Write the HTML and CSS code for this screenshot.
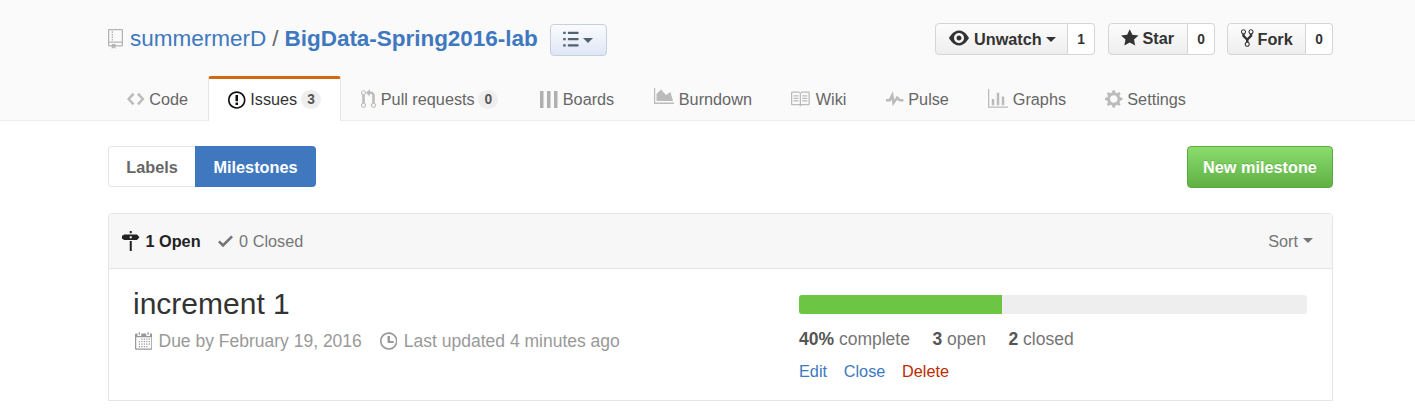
FILE: index.html
```
<!DOCTYPE html>
<html lang="en">
<head>
<meta charset="utf-8">
<title>Milestones · summermerD/BigData-Spring2016-lab</title>
<link rel="stylesheet" href="styles.css">
</head>
<body>
<header class="repohead">
  <div class="container">
    <div class="title-row">
      <svg class="icon repo-icon" width="15" height="20" viewBox="0 0 12 16"><path d="M4 9H3V8h1v1zm0-3H3v1h1V6zm0-2H3v1h1V4zm0-2H3v1h1V2zm8-1v12c0 .55-.45 1-1 1H6v2l-1.500-1.500L3 16v-2H1c-.55 0-1-.45-1-1V1c0-.55.45-1 1-1h10c.55 0 1 .45 1 1zm-1 10H1v2h2v-1h3v1h5v-2zm0-10H1v9h10V1z"/><path d="M3 2h1v1H3zm0 2h1v1H3zm0 2h1v1H3zm0 2h1v1H3z"/></svg>
      <h1 class="repo-name"><a href="#">summermerD</a><span class="slash">/</span><a href="#" class="strong">BigData-Spring2016-lab</a></h1>
      <button class="list-btn" aria-label="Switch list">
        <svg class="icon" width="16" height="20" viewBox="0 0 12.500 16"><path d="M0 2.200h2v1.700H0zM0 7.200h2v1.700H0zM0 12.200h2v1.700H0z"/><rect x="3.700" y="2.200" width="8.600" height="1.700" rx=".5"/><rect x="3.700" y="7.200" width="8.600" height="1.700" rx=".5"/><rect x="3.700" y="12.200" width="8.600" height="1.700" rx=".5"/></svg>
        <i class="caret"></i>
      </button>
      <div class="actions">
        <div class="social watch"><button><svg class="icon" width="20" height="20" viewBox="0 0 16 16"><path d="M8.060 2C3 2 0 8 0 8s3 6 8.060 6C13 14 16 8 16 8s-3-6-7.940-6zM8 12c-2.200 0-4-1.780-4-4 0-2.200 1.800-4 4-4 2.220 0 4 1.800 4 4 0 2.220-1.780 4-4 4zm2-4c0 1.110-.89 2-2 2-1.110 0-2-.89-2-2 0-1.110.89-2 2-2 1.110 0 2 .89 2 2z"/></svg><span>Unwatch</span><i class="caret"></i></button><a class="num" href="#">1</a></div>
        <div class="social star"><button><svg class="icon" width="17.500" height="20" viewBox="0 0 14 16"><path d="M14 6l-4.900-.64L7 1 4.900 5.360 0 6l3.600 3.260L2.670 14 7 11.670 11.330 14l-.93-4.740z"/></svg><span>Star</span></button><a class="num" href="#">0</a></div>
        <div class="social fork"><button><svg class="icon" width="12.500" height="20" viewBox="0 0 10 16"><path d="M8 1a1.993 1.993 0 0 0-1 3.720V6L5 8 3 6V4.720A1.993 1.993 0 0 0 2 1a1.993 1.993 0 0 0-1 3.720V6.500l3 3v1.780A1.993 1.993 0 0 0 5 15a1.993 1.993 0 0 0 1-3.720V9.500l3-3V4.720A1.993 1.993 0 0 0 8 1zM2 4.200C1.340 4.200.8 3.650.8 3c0-.65.55-1.200 1.200-1.200.65 0 1.200.55 1.200 1.200 0 .65-.55 1.200-1.200 1.200zm3 10c-.66 0-1.200-.55-1.200-1.200 0-.65.55-1.200 1.200-1.200.65 0 1.200.55 1.200 1.200 0 .65-.55 1.200-1.200 1.200zm3-10c-.66 0-1.200-.55-1.200-1.200 0-.65.55-1.200 1.200-1.200.65 0 1.200.55 1.200 1.200 0 .65-.55 1.200-1.200 1.200z"/></svg><span>Fork</span></button><a class="num" href="#">0</a></div>
      </div>
    </div>
    <nav class="tabs">
      <a class="tab" href="#"><svg class="icon" width="17.500" height="20" viewBox="0 0 14 16"><path d="M9.500 3L8 4.500 11.500 8 8 11.500 9.500 13 14 8 9.500 3zm-5 0L0 8l4.500 5L6 11.500 2.500 8 6 4.500 4.500 3z"/></svg>Code</a>
      <a class="tab selected" href="#"><svg class="icon" width="17.500" height="20" viewBox="0 0 14 16"><path d="M7 2.300c3.140 0 5.700 2.560 5.700 5.700s-2.560 5.700-5.700 5.700A5.710 5.710 0 0 1 1.300 8c0-3.140 2.560-5.700 5.700-5.700zM7 1C3.140 1 0 4.140 0 8s3.140 7 7 7 7-3.140 7-7-3.140-7-7-7zm1 3H6v5h2V4zm0 6H6v2h2v-2z"/></svg>Issues<span class="counter">3</span></a>
      <a class="tab" href="#"><svg class="icon" width="15" height="20" viewBox="0 0 12 16"><path d="M11 11.280V5c-.03-.78-.34-1.470-.94-2.060C9.460 2.350 8.780 2.030 8 2H7V0L4 3l3 3V4h1c.27.02.48.11.69.31.21.2.3.42.31.69v6.280A1.993 1.993 0 0 0 10 15a1.993 1.993 0 0 0 1-3.720zm-1 2.920c-.66 0-1.200-.55-1.200-1.200 0-.65.55-1.200 1.200-1.200.65 0 1.200.55 1.200 1.200 0 .65-.55 1.200-1.200 1.200zM4 3c0-1.110-.89-2-2-2a1.993 1.993 0 0 0-1 3.720v6.560A1.993 1.993 0 0 0 2 15a1.993 1.993 0 0 0 1-3.720V4.720c.59-.34 1-.98 1-1.720zm-.8 10c0 .66-.55 1.200-1.200 1.200-.65 0-1.200-.55-1.200-1.200 0-.65.55-1.200 1.200-1.200.65 0 1.200.55 1.200 1.200zM2 4.200C1.340 4.200.8 3.650.8 3c0-.65.55-1.200 1.200-1.200.65 0 1.200.55 1.200 1.200 0 .65-.55 1.200-1.200 1.200z"/></svg>Pull requests<span class="counter">0</span></a>
      <a class="tab" href="#"><svg class="icon bars" width="18" height="20" viewBox="0 0 18 20"><path d="M0 2h3.500v17H0zM7 2h3.500v17H7zM14 2h3.500v17H14z"/></svg>Boards</a>
      <a class="tab" href="#"><svg class="icon burn" width="20" height="20" viewBox="0 0 20 20"><path d="M0 1h1.200v14.500H20V17H0zM2.500 14V7L7 2.500 12 8l4.500-3L19 14z"/></svg>Burndown</a>
      <a class="tab" href="#"><svg class="icon" width="20" height="20" viewBox="0 0 16 16"><path d="M2 5h4v1H2zm0 2h4v1H2zm0 2h4v1H2zm7-4h4v1H9zm0 2h4v1H9zm0 2h4v1H9zM15 3v9c0 .55-.45 1-1 1H8.500l-1 1-1-1H1c-.55 0-1-.45-1-1V3c0-.55.45-1 1-1h5.500l1 1 1-1H14c.55 0 1 .45 1 1zM7 3.500L6.500 3H1v9h6zM14 3H8.500l-.5.5V12h6z"/></svg>Wiki</a>
      <a class="tab" href="#"><svg class="icon" width="17.500" height="20" viewBox="0 0 14 16"><path d="M11.500 8L8.800 5.400 6.600 8.500 5.500 1.600 2.380 8H0v2h3.600l.9-1.800.9 5.400L9 8.500l1.600 1.500H14V8z"/></svg>Pulse</a>
      <a class="tab" href="#"><svg class="icon" width="20" height="20" viewBox="0 0 16 16"><path d="M16 14v1H0V0h1v14zM5 13H3V8h2zm4 0H7V3h2zm4 0h-2V6h2z"/></svg>Graphs</a>
      <a class="tab" href="#"><svg class="icon" width="17.500" height="20" viewBox="0 0 14 16"><path d="M14 8.770v-1.600l-1.940-.64-.45-1.090.88-1.840-1.130-1.130-1.810.91-1.090-.45-.69-1.920h-1.600l-.63 1.940-1.110.45-1.840-.88-1.130 1.130.91 1.810-.45 1.090L0 7.230v1.590l1.940.64.45 1.090-.88 1.840 1.130 1.130 1.810-.91 1.090.45.69 1.920h1.590l.63-1.940 1.110-.45 1.840.88 1.130-1.130-.92-1.810.47-1.090L14 8.750zM7 11c-1.660 0-3-1.340-3-3s1.340-3 3-3 3 1.340 3 3-1.340 3-3 3z"/></svg>Settings</a>
    </nav>
  </div>
</header>
<main class="container">
  <div class="subnav">
    <div class="switch"><a href="#" class="labels">Labels</a><a href="#" class="milestones">Milestones</a></div>
    <button class="new">New milestone</button>
  </div>
  <section class="listing">
    <div class="listing-head">
      <a class="state open" href="#"><svg class="icon" width="17.500" height="20" viewBox="0 0 14 16"><path d="M7.800 1.700H6.200V0h1.600zM12 7.200H1.500L.9 6.400H0V3.600h.9l.6-.8H12l2 2.200zM7.800 4.200H6.200v1.600h1.600zM6.200 16h1.600V8H6.200z"/></svg>1 Open</a>
      <a class="state closed" href="#"><svg class="icon" width="15" height="20" viewBox="0 0 12 16"><path d="M12 5l-8 8-4-4 1.500-1.500L4 10l6.500-6.500z"/></svg>0 Closed</a>
      <a class="sort" href="#">Sort<i class="caret"></i></a>
    </div>
    <div class="milestone">
      <div class="info">
        <h2>increment 1</h2>
        <div class="meta">
          <span class="meta-item"><svg class="icon" width="17.500" height="20" viewBox="0 0 14 16"><path d="M13 2h-1v1.500c0 .28-.22.5-.5.5h-2c-.28 0-.5-.22-.5-.5V2H5v1.500c0 .28-.22.5-.5.5h-2c-.28 0-.5-.22-.5-.5V2H1c-.55 0-1 .45-1 1v11c0 .55.45 1 1 1h12c.55 0 1-.45 1-1V3c0-.55-.45-1-1-1zm0 12H1V5h12zM4 3H3V1h1zm7 0h-1V1h1zM6 7H5V6h1zm2 0H7V6h1zm2 0H9V6h1zm2 0h-1V6h1zM4 9H3V8h1zm2 0H5V8h1zm2 0H7V8h1zm2 0H9V8h1zm2 0h-1V8h1zm-8 2H3v-1h1zm2 0H5v-1h1zm2 0H7v-1h1zm2 0H9v-1h1zm2 0h-1v-1h1zm-8 2H3v-1h1zm2 0H5v-1h1zm2 0H7v-1h1zm2 0H9v-1h1z"/></svg>Due by February 19, 2016</span>
          <span class="meta-item"><svg class="icon" width="17.500" height="20" viewBox="0 0 14 16"><path d="M8 8h3v1.500H7c-.55 0-1-.45-1-1V4h2zM7 2.300c3.140 0 5.700 2.560 5.700 5.700s-2.560 5.700-5.700 5.700A5.710 5.710 0 0 1 1.300 8c0-3.140 2.560-5.700 5.700-5.700zM7 1C3.140 1 0 4.140 0 8s3.140 7 7 7 7-3.140 7-7-3.140-7-7-7z"/></svg>Last updated 4 minutes ago</span>
        </div>
      </div>
      <div class="progress-col">
        <div class="progress"><div class="bar" style="width:40%"></div></div>
        <div class="stats"><span><b>40%</b> complete</span><span><b>3</b> open</span><span><b>2</b> closed</span></div>
        <div class="links"><a href="#">Edit</a><a href="#">Close</a><a href="#" class="delete">Delete</a></div>
      </div>
    </div>
  </section>
</main>
</body>
</html>
```
FILE: styles.css
```
* { box-sizing: border-box; }
body {
  margin: 0;
  background: #fff;
  color: #333;
  font: 16.25px/20px "Liberation Sans", Arial, sans-serif;
}
a { color: #4078c0; text-decoration: none; }
button { font: inherit; cursor: pointer; margin: 0; }
.icon { display: block; flex: none; fill: currentColor; fill-rule: evenodd; }
.caret {
  border: 5px solid transparent;
  border-top-color: currentColor;
  border-bottom: 0;
}
.container { width: 1225px; margin-left: 108px; }

.repohead { height: 121px; background: #fafafa; border-bottom: 1px solid #eee; }
.title-row { display: flex; height: 76px; align-items: flex-start; }
.repo-icon { margin-top: 29px; color: #b4b4b4; }
.repo-name {
  display: flex;
  margin: 25px 0 0 7px;
  font-size: 22.5px;
  line-height: 28px;
  font-weight: 400;
  white-space: nowrap;
}
.slash { margin: 0 6px; color: #666; }
.strong { width: 253px; font-weight: 700; letter-spacing: -.03px; }
.list-btn {
  display: flex;
  align-items: center;
  width: 57px;
  height: 32px;
  margin: 24px 0 0 12px;
  padding: 0 0 1px 12px;
  border: 1px solid #c5d0da;
  border-radius: 4px;
  background: linear-gradient(#fafbfd, #dfe7f5);
  color: #53606f;
}
.list-btn .icon { margin-top: -1px; }
.list-btn .caret { margin: 1px 0 0 4px; }

.actions { display: flex; margin: 23px 0 0 auto; gap: 12px; }
.social { display: flex; height: 32px; font-weight: 700; }
.social button {
  display: flex;
  flex: 1;
  align-items: center;
  padding: 0 0 0 12px;
  border: 1px solid #d5d5d5;
  border-radius: 4px 0 0 4px;
  background: linear-gradient(#fcfcfc, #eee);
  color: #333;
  font-weight: 700;
}
.social .num {
  width: 27px;
  border: 1px solid #d5d5d5;
  border-left: 0;
  border-radius: 0 4px 4px 0;
  background: #fff;
  color: #333;
  font-size: 13.75px;
  line-height: 31px;
  text-align: center;
}
.social .icon { margin-top: -2px; }
.watch { width: 160px; }
.watch button { padding-left: 13px; }
.watch span { margin-left: 5px; }
.watch .caret { margin-left: 4px; }
.star { width: 107px; margin-left: 1px; }
.star span { margin: -2px 0 0 4px; }
.fork { width: 106px; }
.fork button { padding-left: 13px; }
.fork span { margin-left: 4px; }

.tabs {
  display: grid;
  grid-template-columns: 100px 133px 179px 114px 137px 95px 102px 117px 130px;
  height: 45px;
}
.tab {
  display: flex;
  align-items: center;
  gap: 4.75px;
  padding: 0 0 0 20px;
  color: #666;
  white-space: nowrap;
}
.tab:first-child { padding-left: 19px; }
.tab .icon { margin-top: 1px; color: #bbb; }
.tab .burn { margin-top: -3px; }
.tab .bars { margin-top: 0; color: #b0b0b0; }
.tab .counter {
  min-width: 20px;
  height: 19px;
  margin: 1px 0 0 -1px;
  padding: 0 6px;
  border-radius: 10px;
  background: #eee;
  color: #555;
  font-size: 13.75px;
  font-weight: 700;
  line-height: 20px;
  text-align: center;
}
.tab.selected {
  padding: 0 0 2px 19px;
  border: 1px solid #e5e5e5;
  border-top: 3px solid #d26911;
  border-bottom: 0;
  border-radius: 3px 3px 0 0;
  background: #fff;
  color: #333;
}
.tab.selected .icon { color: #111; }

.subnav { display: flex; justify-content: space-between; margin: 25px 0; height: 42px; }
.switch { display: flex; height: 41px; font-weight: 700; line-height: 41px; }
.switch a { text-align: center; }
.labels {
  width: 87px;
  border: 1px solid #e5e5e5;
  border-right: 0;
  border-radius: 4px 0 0 4px;
  color: #666;
}
.milestones { width: 121px; border-radius: 0 4px 4px 0; background: #4078c0; color: #fff; padding-top: 1px; }
.new {
  width: 146px;
  height: 42px;
  padding: 0 0 1px;
  border: 1px solid #5ca941;
  border-radius: 4px;
  background: linear-gradient(#8add6d, #60b044);
  color: #fff;
  font-weight: 700;
  text-shadow: 0 -1px 0 rgba(0, 0, 0, .15);
}

.listing { height: 188px; border: 1px solid #e5e5e5; border-radius: 4px 4px 0 0; }
.listing-head {
  display: flex;
  align-items: center;
  height: 55px;
  padding: 0 19px 1px 13px;
  border-bottom: 1px solid #e5e5e5;
  background: #f7f7f7;
  border-radius: 3px 3px 0 0;
}
.state { display: flex; align-items: center; gap: 6px; margin-right: 17px; color: #767676; }
.state.open { color: #222; font-weight: 700; }
.state.closed { gap: 6.5px; }
.sort { display: flex; align-items: center; gap: 5px; margin-left: auto; color: #767676; }
.milestone { display: flex; padding: 16px 25px 0 24px; }
.info { width: 666px; }
.info h2 { margin: 0; font-size: 30px; font-weight: 400; line-height: 37px; color: #333; }
.meta { display: flex; gap: 18px; margin: 9px 0 0 1.5px; font-size: 17.5px; color: #999; }
.meta-item { display: flex; gap: 6.5px; }
.progress-col { width: 508px; padding-top: 10px; }
.progress { height: 19px; border-radius: 3px; overflow: hidden; background: #eee; }
.bar { height: 100%; background: #6cc644; }
.stats { display: flex; gap: 22.500px; margin-top: 15px; font-size: 17.5px; color: #767676; }
.stats b { color: #555; }
.links { display: flex; gap: 16.75px; margin-top: 12px; }
.links .delete { color: #bd2c00; }
```
